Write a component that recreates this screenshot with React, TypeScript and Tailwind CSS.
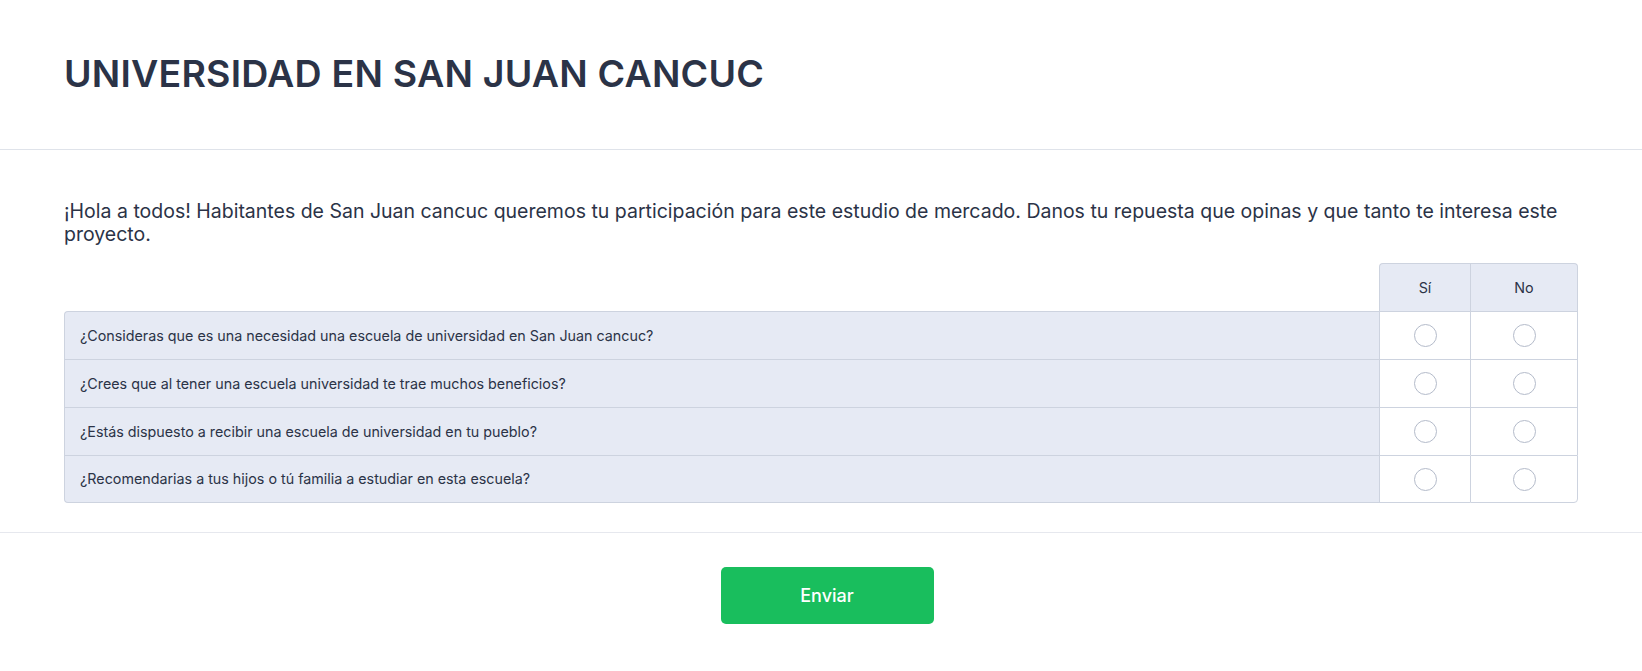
const questions = [
  '¿Consideras que es una necesidad una escuela de universidad en San Juan cancuc?',
  '¿Crees que al tener una escuela universidad te trae muchos beneficios?',
  '¿Estás dispuesto a recibir una escuela de universidad en tu pueblo?',
  '¿Recomendarias a tus hijos o tú familia a estudiar en esta escuela?',
];

function Radio() {
  return <span className="block h-[23px] w-[23px] rounded-full border border-[#b4bbca] bg-white" />;
}

export default function App() {
  return (
    <div className="min-h-[671px] bg-white text-[#2b3347]" style={{ fontFamily: 'Inter, "Noto Sans", sans-serif' }}>
      <header className="flex h-[150px] items-center border-b border-[#dfe3ea] px-16">
        <h1 className="text-[37.5px] font-semibold tracking-[0.2px]">UNIVERSIDAD EN SAN JUAN CANCUC</h1>
      </header>

      <main className="border-b border-[#e6e8ee] px-16 pb-[29px] pt-[50px]">
        <p className="text-[19.5px] leading-[23px]">
          ¡Hola a todos! Habitantes de San Juan cancuc queremos tu participación para este estudio de mercado. Danos tu repuesta que opinas y que tanto te interesa este proyecto.
        </p>

        <div className="mt-[17px] grid grid-cols-[1fr_91px_108px] text-[14.3px]">
          <div />
          <div className="flex h-[48px] items-center justify-center rounded-tl-[4px] border-l border-t border-[#cdd3df] bg-[#e6eaf4]">Sí</div>
          <div className="flex h-[48px] items-center justify-center rounded-tr-[4px] border-l border-r border-t border-[#cdd3df] bg-[#e6eaf4]">No</div>

          {questions.map((q, i) => {
            const last = i === questions.length - 1;
            const first = i === 0;
            return (
              <div key={q} className="contents">
                <div
                  className={`flex h-[48px] items-center border-l border-t border-[#cdd3df] bg-[#e6eaf4] pl-[15px] ${first ? 'rounded-tl-[4px]' : ''} ${last ? 'rounded-bl-[4px] border-b' : ''}`}
                >
                  {q}
                </div>
                <div className={`flex h-[48px] items-center justify-center border-l border-t border-[#cdd3df] ${last ? 'border-b' : ''}`}>
                  <Radio />
                </div>
                <div className={`flex h-[48px] items-center justify-center border-l border-r border-t border-[#cdd3df] ${last ? 'rounded-br-[4px] border-b' : ''}`}>
                  <Radio />
                </div>
              </div>
            );
          })}
        </div>
      </main>

      <footer className="flex justify-center pl-[12px] pt-[34px]">
        <button className="h-[57px] w-[213px] rounded-[5px] bg-[#19be5d] text-[18px] font-medium text-white">Enviar</button>
      </footer>
    </div>
  );
}
